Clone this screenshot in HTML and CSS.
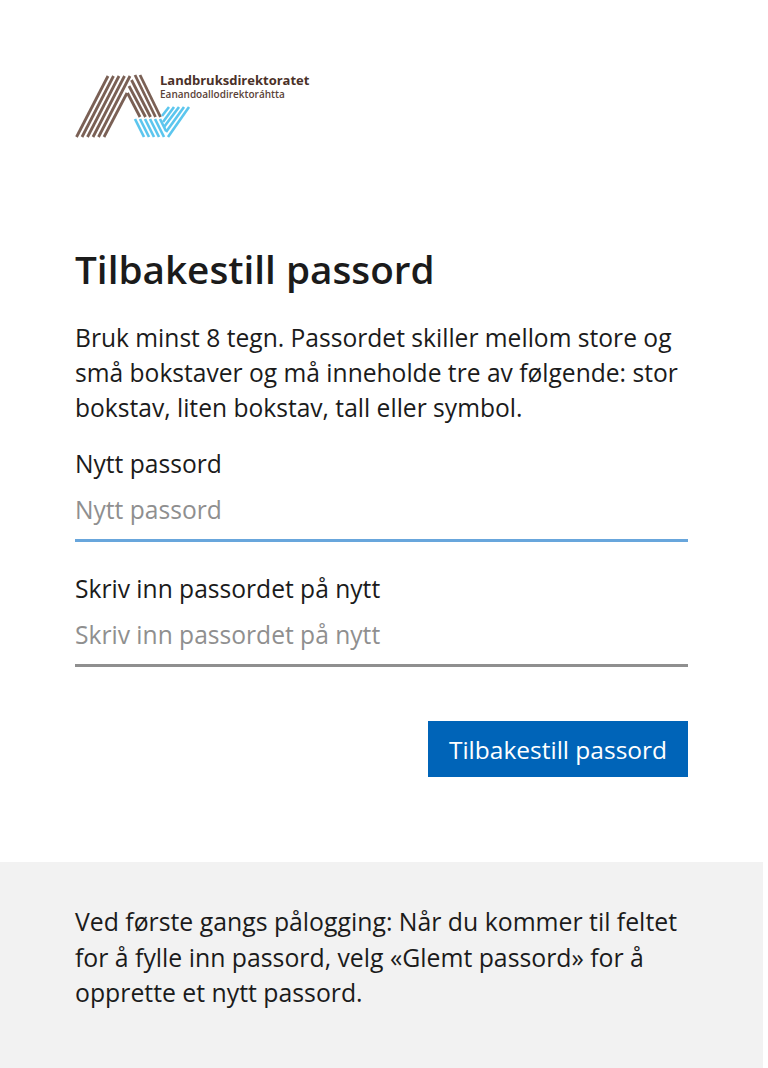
FILE: index.html
```html
<!DOCTYPE html>
<html lang="nb">
<head>
  <meta charset="UTF-8" />
  <meta name="viewport" content="width=device-width, initial-scale=1" />
  <title>Tilbakestill passord</title>
  <link rel="stylesheet" href="styles.css">
</head>
<body>
  <div class="page">
    <main class="panel">
      <div class="logo">
        <svg class="logo-mark" width="116" height="64" viewBox="0 0 116 64" fill="none">
          <g stroke="#7a6055" stroke-width="2.8">
            <path d="M1.500 63 L33 2" />
            <path d="M7 63 L38.500 2" />
            <path d="M12.500 63 L44 2" />
            <path d="M18 63 L49.500 2" />
            <path d="M23.500 63 L55 2" />
            <path d="M29 63 L52 19" />
            <path d="M65 1 L85.500 43" />
            <path d="M60 1 L80.500 43" />
            <path d="M56.500 6 L75.500 43" />
            <path d="M54 12 L70.500 43" />
            <path d="M52.500 19 L65 43" />
          </g>
          <g stroke="#5cc6ee" stroke-width="2.6">
            <path d="M60 45 L69 63" />
            <path d="M65 45 L74 63" />
            <path d="M70 45 L79 63" />
            <path d="M75 45 L84 63" />
            <path d="M80 45 L89 63" />
            <path d="M85 45 L91 57" />
            <path d="M114 33 L93 63" />
            <path d="M109 33 L91 58" />
            <path d="M104 33 L89 53" />
            <path d="M99 33 L88 48" />
            <path d="M94 33 L87 42" />
          </g>
        </svg>
        <div class="logo-text">
          <span class="logo-name">Landbruksdirektoratet</span>
          <span class="logo-sub">Eanandoallodirektoráhtta</span>
        </div>
      </div>

      <h1>Tilbakestill passord</h1>
      <p class="intro">Bruk minst 8 tegn. Passordet skiller mellom store og små bokstaver og må inneholde tre av følgende: stor bokstav, liten bokstav, tall eller symbol.</p>

      <form class="reset-form">
        <label class="field field-active">
          <span class="field-label">Nytt passord</span>
          <input type="password" placeholder="Nytt passord">
        </label>
        <label class="field">
          <span class="field-label">Skriv inn passordet på nytt</span>
          <input type="password" placeholder="Skriv inn passordet på nytt">
        </label>
        <div class="actions">
          <button type="button">Tilbakestill passord</button>
        </div>
      </form>
    </main>

    <footer class="note">
      <p>Ved første gangs pålogging: Når du kommer til feltet for å fylle inn passord, velg «Glemt passord» for å opprette et nytt passord.</p>
    </footer>
  </div>
</body>
</html>
```

FILE: styles.css
```css
body {
  margin: 0;
  background: #fff;
  font-family: "Open Sans", "Noto Sans", sans-serif;
  color: #1b1b1b;
}
.page {
  width: 763px;
  height: 1068px;
  display: flex;
  flex-direction: column;
}
.panel {
  flex: 1;
  padding: 74px 75px 0;
}
.logo {
  display: flex;
  height: 64px;
}
.logo-mark {
  flex: none;
  filter: blur(0.5px);
}
.logo-text {
  display: flex;
  flex-direction: column;
  margin-left: -31px;
  white-space: nowrap;
}
.logo-name {
  font-size: 13px;
  line-height: 13px;
  font-weight: 700;
  color: #4a3128;
}
.logo-sub {
  font-size: 10px;
  line-height: 15px;
  font-weight: 600;
  color: #5a4238;
}
h1 {
  margin: 105px 0 0;
  font-size: 38.700px;
  line-height: 52px;
  font-weight: 600;
}
.intro {
  margin: 25px 0 0;
  font-size: 24.600px;
  line-height: 35px;
}
.reset-form {
  margin-top: 21px;
}
.field {
  display: block;
}
.field + .field {
  margin-top: 29px;
}
.field-label {
  display: block;
  font-size: 24.600px;
  line-height: 35px;
  padding-bottom: 1px;
}
.field input {
  display: block;
  width: 100%;
  box-sizing: border-box;
  height: 60px;
  padding: 0 0 2px;
  border: 0;
  border-bottom: 3px solid #8f8f8f;
  background: none;
  font: inherit;
  font-size: 24.600px;
  outline: none;
}
.field input::placeholder {
  color: #8f8f8f;
  opacity: 1;
}
.field-active input {
  border-bottom-color: #68a6dc;
}
.actions {
  display: flex;
  justify-content: flex-end;
  margin-top: 54px;
}
button {
  width: 260px;
  height: 56px;
  border: 0;
  padding: 0;
  background: #0064b8;
  color: #fff;
  font: inherit;
  font-size: 24.500px;
}
.note {
  background: #f2f2f2;
  height: 206px;
  padding: 42px 75px 0;
  box-sizing: border-box;
}
.note p {
  margin: 0;
  font-size: 24.800px;
  line-height: 35.500px;
}
```
